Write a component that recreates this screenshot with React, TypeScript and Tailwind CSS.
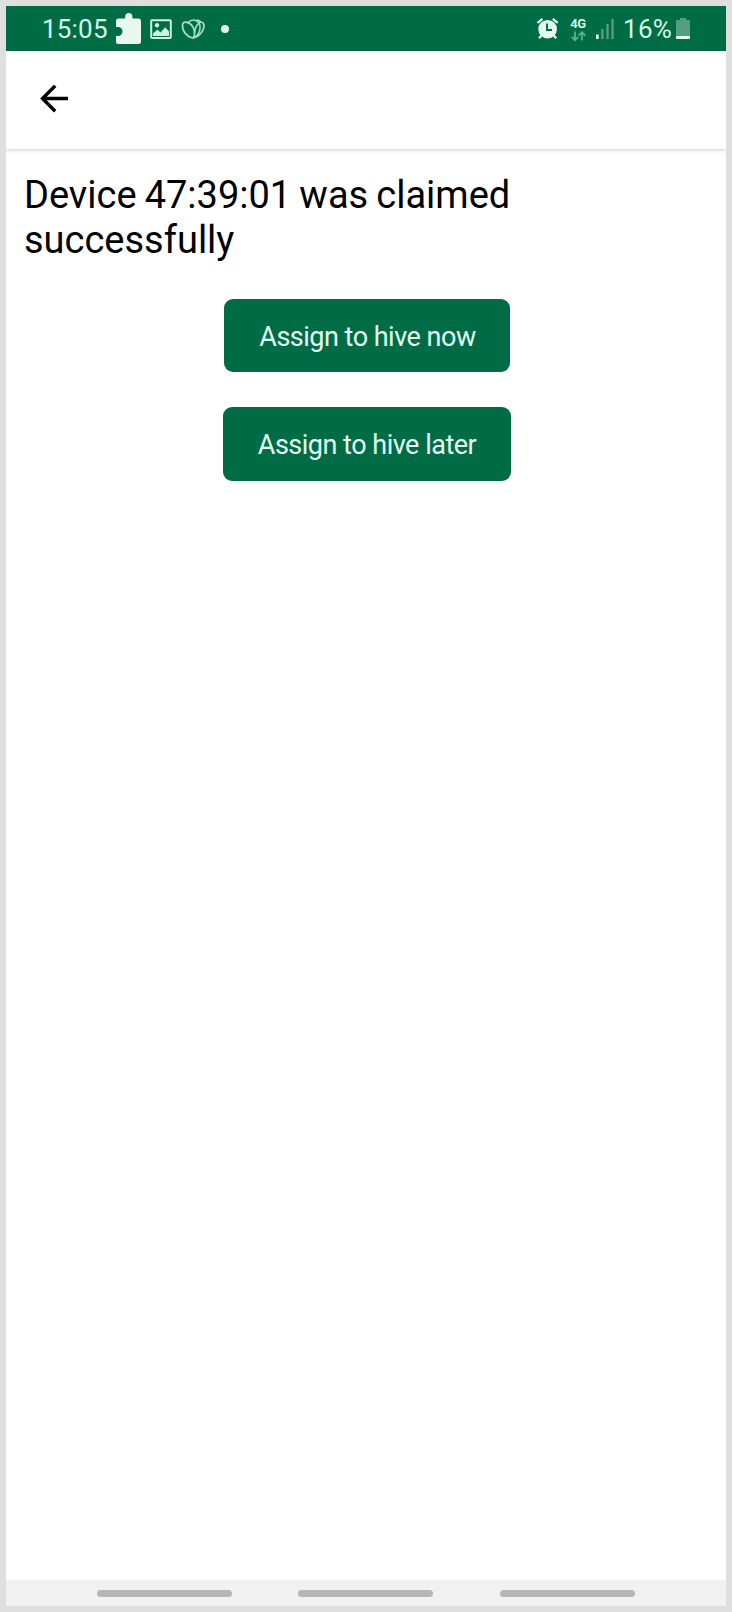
import React from "react";

function PuzzleIcon() {
  return (
    <svg className="ml-[8px] h-[45px] w-[26px] shrink-0" viewBox="0 0 26 45" fill="#e9f7ef">
      <path d="M2.500 12.500H9.200V10.500a3.600 3.600 0 0 1 7.200 0V12.500H22.500Q25 12.500 25 15V35.500Q25 38 22.500 38H2.500Q0 38 0 35.500V30H2a4.500 4.500 0 0 0 0-9H0V15Q0 12.500 2.500 12.500Z" />
    </svg>
  );
}

function PictureIcon() {
  return (
    <svg className="ml-[8px] h-[45px] w-[23px] shrink-0" viewBox="0 0 23 45">
      <rect x="1.200" y="14.200" width="19.600" height="17.800" rx="0.800" fill="none" stroke="#c9f2df" strokeWidth="2" />
      <circle cx="7" cy="19.300" r="2.200" fill="#c9f2df" />
      <path d="M3 30V27.500L7.500 23.500L10.500 26.500L15.300 21.300L19 25.500V30Z" fill="#c9f2df" />
    </svg>
  );
}

function PetalsIcon() {
  return (
    <svg className="ml-[8px] h-[45px] w-[25px] shrink-0" viewBox="0 0 25 45" fill="none" stroke="#a5dcc4" strokeWidth="1.700" strokeLinejoin="round">
      <path d="M12 32C6 31 1 25 1.500 19C1.700 17 3 16 5 16.200C10.500 17 14 22.500 13.500 28C13.300 30 13 31 12 32Z" />
      <path d="M7.200 16.500C8.500 14.800 10.500 13.900 13 14C17.500 15 19.500 18.500 19 22.500C18.500 27 16 30.500 12 32" />
      <path d="M14.800 14.800C16.500 13.800 18.500 14.200 19.500 16C21 16 22.500 16.800 22.900 18.500C23.500 24.500 18.500 30.500 12 32" />
      <path d="M19.500 16C16 18 14 22 13.500 27" />
    </svg>
  );
}

function AlarmIcon() {
  return (
    <svg className="h-[45px] w-[24px] shrink-0" viewBox="0 0 24 45">
      <g stroke="#e4faf0" strokeWidth="2.300" fill="none">
        <path d="M1.500 16.800L6.400 12.900M16.800 12.900L21.700 16.800" />
        <path d="M5.500 29.500L3 32.300M17.700 29.500L20.200 32.300" />
      </g>
      <circle cx="11.600" cy="23.200" r="9.300" fill="#e4faf0" />
      <path d="M11 17.500V24H16" stroke="#006c45" strokeWidth="1.900" fill="none" />
    </svg>
  );
}

function DataArrows() {
  return (
    <svg className="h-[11px] w-[15px]" viewBox="0 0 15 11" fill="none" stroke="#5fae8d" strokeWidth="1.800">
      <path d="M4 0.500V9M0.800 5.800L4 9.200L7.200 5.800M11 9.500V1M7.800 4.500L11 1.200L14.200 4.500" />
    </svg>
  );
}

function SignalIcon() {
  return (
    <svg className="ml-[9px] h-[45px] w-[20px] shrink-0" viewBox="0 0 20 45">
      <rect x="1" y="28.500" width="2.700" height="4.500" fill="#e4faf0" />
      <rect x="6.200" y="23" width="2.300" height="10" fill="#559f80" />
      <rect x="11.400" y="18" width="2.300" height="15" fill="#559f80" />
      <rect x="16.400" y="13" width="2.300" height="20" fill="#559f80" />
    </svg>
  );
}

function BatteryIcon() {
  return (
    <svg className="h-[45px] w-[14px] shrink-0" viewBox="0 0 14 45">
      <path d="M4 12H10V14H13Q14 14 14 15V30H0V15Q0 14 1 14H4Z" fill="#559f80" />
      <path d="M0 30H14V32.300Q14 33 13.300 33H0.700Q0 33 0 32.300Z" fill="#e4faf0" />
    </svg>
  );
}

function StatusBar() {
  return (
    <div className="flex h-[45px] shrink-0 items-center bg-[#006c45] pl-[36px] pr-[36px] text-[#d3f8e7]">
      <span className="w-[66px] shrink-0 whitespace-nowrap pt-[2px] text-[26px] leading-[45px] tracking-[0.2px]">15:05</span>
      <PuzzleIcon />
      <PictureIcon />
      <PetalsIcon />
      <span className="ml-[15px] size-[8px] rounded-full bg-[#e4faf0]" />
      <div className="ml-auto flex items-center">
        <AlarmIcon />
        <div className="ml-[10px] flex w-[16px] flex-col items-center gap-[2px] pt-[2px]">
          <span className="whitespace-nowrap text-[13px] font-bold leading-[11px] tracking-[-0.3px]">4G</span>
          <DataArrows />
        </div>
        <SignalIcon />
        <span className="ml-[8px] w-[53px] whitespace-nowrap pt-[2px] text-[26px] leading-[45px] tracking-[0.3px]">16%</span>
        <BatteryIcon />
      </div>
    </div>
  );
}

function Header() {
  return (
    <header className="z-10 flex h-[98px] shrink-0 items-center bg-white pl-[34px] shadow-[0_1px_4px_rgba(0,0,0,0.2)]">
      <button aria-label="Back">
        <svg className="block h-[30px] w-[29px]" viewBox="0 0 29 30" fill="none" stroke="#000" strokeWidth="3.400">
          <path d="M28 13.500H2.500M15.200 0.800L2.500 13.500L15.200 26.200" />
        </svg>
      </button>
    </header>
  );
}

export default function App() {
  return (
    <div className="flex h-[1612px] w-[732px] flex-col overflow-hidden border-[6px] border-[#dfdfdf] bg-white font-[Roboto,sans-serif]">
      <StatusBar />
      <Header />
      <main className="flex flex-1 flex-col items-center pt-[24px]">
        <h1 className="w-full pl-[18px] pr-[180px] text-[38px] leading-[45px] text-black [word-spacing:-1.3px]">
          Device 47:39:01 was claimed successfully
        </h1>
        <button className="ml-[2px] mt-[36px] h-[73px] w-[286px] rounded-[9px] bg-[#006c45] pl-[1px] pt-[3px] text-[27px] tracking-[-0.5px] text-[#e2fdf2]">
          Assign to hive now
        </button>
        <button className="ml-[2px] mt-[35px] h-[74px] w-[288px] rounded-[9px] bg-[#006c45] pt-[2px] text-[27px] tracking-[-0.5px] text-[#e2fdf2]">
          Assign to hive later
        </button>
      </main>
      <nav className="flex h-[26px] shrink-0 gap-[66px] bg-[#f1f1f1] pl-[91px] pt-[10px]">
        <span className="h-[7px] w-[135px] rounded-full bg-[#b6b6b6]" />
        <span className="h-[7px] w-[135px] rounded-full bg-[#b6b6b6]" />
        <span className="ml-px h-[7px] w-[135px] rounded-full bg-[#b6b6b6]" />
      </nav>
    </div>
  );
}
